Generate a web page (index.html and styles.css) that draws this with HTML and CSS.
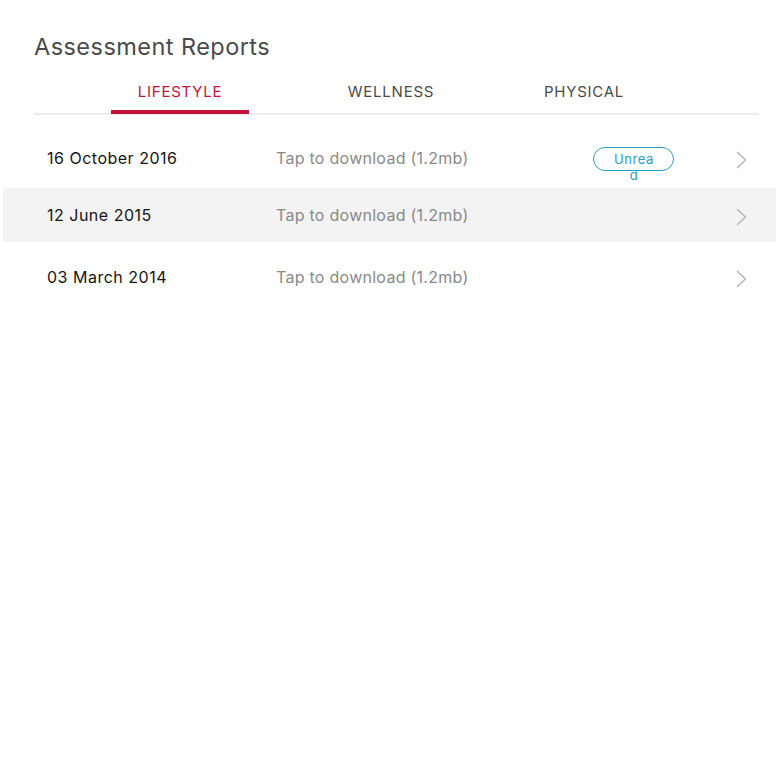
FILE: index.html
```html
<!DOCTYPE html>
<html lang="en">
<head>
<meta charset="utf-8">
<title>Assessment Reports</title>
<link rel="stylesheet" href="styles.css">
</head>
<body>
<div class="page">
  <header class="head">
    <h1 class="title">Assessment Reports</h1>
    <nav class="tabs">
      <div class="tab tab-lifestyle active">LIFESTYLE</div>
      <div class="tab tab-wellness">WELLNESS</div>
      <div class="tab tab-physical">PHYSICAL</div>
    </nav>
  </header>
  <ul class="reports">
    <li class="row row-first">
      <span class="date">16 October 2016</span>
      <span class="dl">Tap to download (1.2mb)</span>
      <span class="badge-cell"><span class="badge">Unread</span></span>
      <svg class="chev" width="11" height="18" viewBox="0 0 11 18"><path d="M1 1 L9.5 9 L1 17" fill="none" stroke="#b3b3b3" stroke-width="1.3"/></svg>
    </li>
    <li class="row row-shaded">
      <span class="date">12 June 2015</span>
      <span class="dl">Tap to download (1.2mb)</span>
      <span class="badge-cell"></span>
      <svg class="chev" width="11" height="18" viewBox="0 0 11 18"><path d="M1 1 L9.5 9 L1 17" fill="none" stroke="#b3b3b3" stroke-width="1.3"/></svg>
    </li>
    <li class="row row-last">
      <span class="date">03 March 2014</span>
      <span class="dl">Tap to download (1.2mb)</span>
      <span class="badge-cell"></span>
      <svg class="chev" width="11" height="18" viewBox="0 0 11 18"><path d="M1 1 L9.5 9 L1 17" fill="none" stroke="#b3b3b3" stroke-width="1.3"/></svg>
    </li>
  </ul>
</div>
</body>
</html>
```
FILE: styles.css
```css
* { box-sizing: border-box; }
html, body { margin: 0; padding: 0; background: #fff; }
body {
  font-family: Inter, Roboto, "Liberation Sans", sans-serif;
  width: 780px;
  height: 774px;
}
.page { padding-top: 30px; }
.head { padding: 0 22px 0 34px; }
.title {
  margin: 0;
  font-size: 23.5px;
  line-height: 34px;
  font-weight: 400;
  color: #4a4a4a;
  letter-spacing: 0.45px;
}
.tabs {
  display: flex;
  margin-top: 15px;
  border-bottom: 2px solid #ececec;
  height: 36px;
}
.tab {
  font-size: 15px;
  letter-spacing: 0.75px;
  color: #4a4a4a;
  text-align: center;
  line-height: 22px;
  padding-top: 2px;
}
.tab-lifestyle { margin-left: 77px; width: 138px; }
.tab-wellness { margin-left: 73px; width: 138px; }
.tab-physical { margin-left: 55px; width: 138px; }
.tab.active {
  color: #c4123a;
  border-bottom: 4px solid #c4123a;
  height: 35px;
}
.reports {
  list-style: none;
  margin: 16px 4px 0 3px;
  padding: 0;
}
.row {
  display: flex;
  align-items: center;
  height: 54px;
  padding-left: 44px;
}
.row-first { height: 57px; padding-bottom: 3px; }
.row-shaded { background: #f3f3f3; }
.row-last { margin-top: 8px; }
.date {
  width: 229px;
  font-size: 16px;
  letter-spacing: 0.5px;
  color: #141414;
}
.dl {
  width: 317px;
  font-size: 16px;
  letter-spacing: 0.27px;
  color: #8a8a8a;
}
.badge-cell { width: 143px; height: 23px; }
.badge {
  display: block;
  width: 81px;
  height: 24px;
  border: 1px solid #2c9ccb;
  border-radius: 12px;
  color: #2c9ccb;
  font-size: 13px;
  letter-spacing: 0.6px;
  line-height: 16px;
  padding: 3px 17px 0 18px;
  text-align: center;
  word-break: break-all;
}
.chev { display: block; margin-top: 3px; }
```
